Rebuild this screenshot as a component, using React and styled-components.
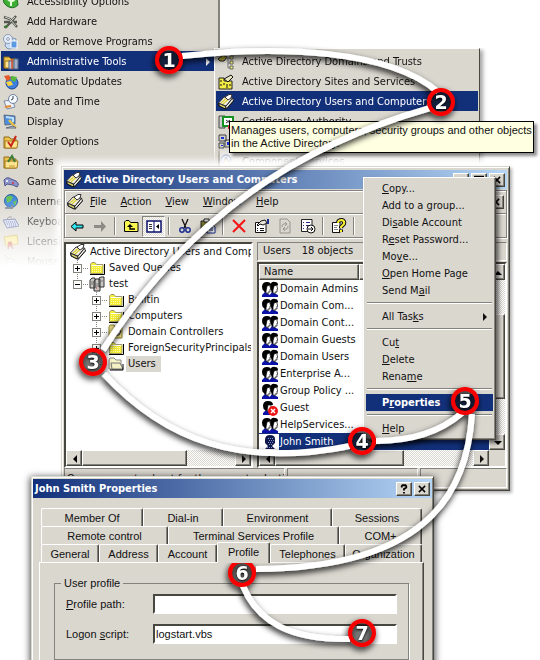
import React from 'react';
import styled, { createGlobalStyle, css } from 'styled-components';

const colors = {
  face: '#dad7cf',
  navy: '#12307a',
  sky: '#b4d5f5',
  shade: '#84827c',
  dark: '#47463f',
  info: '#ffffe1',
};

const fonts = {
  ui: "'DejaVu Sans Condensed', 'DejaVu Sans', sans-serif",
  dialog: "'Liberation Sans', Arial, sans-serif",
};

const raised = css`
  border: 1px solid;
  border-color: #fff ${colors.dark} ${colors.dark} #fff;
  box-shadow: inset -1px -1px ${colors.shade};
`;

const sunken = css`
  border: 2px solid;
  border-color: ${colors.dark} #fff #fff ${colors.dark};
`;

const GlobalStyle = createGlobalStyle`
  * { box-sizing: border-box; }
  body { margin: 0; background: #fff; }
  button {
    margin: 0;
    padding: 0;
    border: 0;
    background: none;
    color: inherit;
    font: inherit;
    text-align: left;
  }
  ul { margin: 0; padding: 0; list-style: none; }
`;

const Desktop = styled.main`
  position: relative;
  height: 100vh;
  min-height: 400px;
  overflow: hidden;
  color: #111;
  font: 11px/16px ${fonts.ui};
  white-space: nowrap;
`;

/* ---------- icons ---------- */

const Svg = styled.svg`
  display: block;
  flex: none;
  width: ${p => p.$size || 16}px;
  height: ${p => p.$size || 16}px;
`;

const people = (
  <>
    <path d="M0 16 V14 L3 11 L8 14 V16 Z M7 15 L10 11 L16 14 V16 H7 Z" fill="#0a12a8" />
    <path d="M0 6 Q0 1 5 1 Q9 1 9 4 L6 5 L5 10 L3 12 L2 10 Q0 9 0 6 Z" fill="#000" />
    <path d="M5 5 L8 4 L8 6 L9 8 L8 8 V11 H6 V13 L4 12 V10 Z" fill="#fff" stroke="#000" strokeWidth="0.7" />
    <path d="M8 5 Q9 0 13 1 Q16 1 16 4 L14 5 L12 10 L10 12 L9 9 Z" fill="#000" />
    <path d="M12 5 L15 4 L15 6 L16 8 L15 8 V11 H13 V13 L11 12 V9 Z" fill="#fff" stroke="#000" strokeWidth="0.7" />
  </>
);

const folder = (
  <>
    <path d="M1.5 13.5 V4 L3 2.5 H6 L7.5 4.5 H14 V13.5 Z" fill="#f4ee35" stroke="#a09c70" />
    <path d="M1 14.5 H15.5 V4" fill="none" stroke="#000" />
    <path d="M2.5 5.5 H13" stroke="#fff" />
    <path d="M3 7.5 H13 M3 9.5 H13 M3 11.5 H13" stroke="#fffbb0" strokeDasharray="1 1" />
  </>
);

const book = (
  <>
    <path d="M0.5 9 L8 12 L7 15 L1 12 Z" fill="#77756c" stroke="#111" />
    <path d="M8 12 L14.5 4 L15.5 7 L8 15.5 Z" fill="#a9a79c" stroke="#111" />
    <path d="M8 13.5 L15 5.5" stroke="#fff" />
    <path d="M0.5 9 L6 3 L14.5 4 L8 12 Z" fill="#efece2" stroke="#333" />
    <path d="M3 9 L8 4.5 M5 10 L11 4.5" stroke="#d9cf35" strokeWidth="1.2" />
    <path d="M7 3 L11 0.5 H14 L13 4 L10 6 Z" fill="#fff" stroke="#333" />
    <path d="M2 11 L7 13.5" stroke="#f5ed58" />
  </>
);

const manila = (
  <>
    <path d="M1 14 V3 H6 L8 5 H13 V14 Z" fill="#eec34f" stroke="#8f6915" />
    <path d="M2 14 V7 H15 L14 14 Z" fill="#ffe58f" stroke="#a47b1c" />
  </>
);

const icons = {
  access: (
    <>
      <path d="M0 4 L10 0 L14 4 L15 11 Q10 16 4 12 L1 9 Z" fill="#3fae36" stroke="#1f7322" />
      <path d="M4 4 Q8 10 12 5 M8 4 V12" stroke="#e4ffd8" strokeWidth="2" fill="none" />
    </>
  ),
  hardware: (
    <>
      <path d="M1 3 L7 5 L14 13 M13 2 L7 9 L2 14 M1 8 L14 8" stroke="#555850" strokeWidth="2.4" fill="none" />
      <path d="M2 3 L7 5 L13 12 M12 3 L7 8" stroke="#cfcfc8" fill="none" />
      <path d="M1 13 L5 12" stroke="#3f7a35" strokeWidth="2" />
    </>
  ),
  programs: (
    <>
      <path d="M4 2 L13 5 V14 L5 15 L2 12 Z" fill="#c9dcf3" stroke="#7b93b5" />
      <circle cx="5" cy="5" r="4.5" fill="#e4ecf8" stroke="#8d9bb5" />
      <circle cx="5" cy="5" r="1.4" fill="#fff" stroke="#8d9bb5" />
      <rect x="8" y="7" width="6" height="7" fill="#5d99e0" stroke="#fff" />
    </>
  ),
  admin: (
    <>
      {manila}
      <rect x="6" y="7" width="4" height="8" fill="#b9c7dc" stroke="#536785" />
      <rect x="11" y="5" width="4" height="10" fill="#a3b2c8" stroke="#536785" />
      <path d="M9 5 V15" stroke="#d8502b" strokeWidth="1.5" />
    </>
  ),
  updates: (
    <>
      <circle cx="9" cy="9" r="6" fill="#3d7fe0" stroke="#1d4590" />
      <path d="M1 2 L6 1 L8 5 L4 7 Z" fill="#e25a2b" />
      <path d="M8 2 L14 3 L12 8 L8 6 Z" fill="#58b83a" />
      <path d="M3 8 L8 7 L10 11 L5 12 Z" fill="#ffd43a" />
    </>
  ),
  date: (
    <>
      <path d="M1 7 L9 6 L12 13 L4 15 Z" fill="#eef3fb" stroke="#7a8ba8" />
      <path d="M2 13 L8 12" stroke="#e0892c" strokeWidth="2" />
      <circle cx="10" cy="5" r="4.5" fill="#f6f9ff" stroke="#6c7f9e" />
      <path d="M10 2 V5 L8 6" stroke="#345" fill="none" />
    </>
  ),
  display: (
    <>
      <path d="M1 1 L12 2 V10 L2 11 Z" fill="#4a90df" stroke="#5f6d80" />
      <path d="M3 3 L10 4 V8" stroke="#bfe0ff" strokeWidth="2" fill="none" />
      <path d="M6 6 L13 14" stroke="#e8bf45" strokeWidth="2.5" />
      <path d="M3 14 L10 12 L13 14 Z" fill="#c7cedb" stroke="#5f6d80" />
    </>
  ),
  options: (
    <>
      {manila}
      <path d="M5 8 L8 12 L13 2" stroke="#c8281c" strokeWidth="2" fill="none" />
    </>
  ),
  fonts: (
    <>
      {manila}
      <path d="M5 8 L9 2 L12 8" stroke="#3d7d37" strokeWidth="2" fill="none" />
      <path d="M6 12 H12" stroke="#c69a2e" />
    </>
  ),
  game: (
    <>
      <path d="M1 6 Q4 2 8 5 L13 7 Q17 10 14 13 L10 11 L4 10 L2 12 Z" fill="#8d94cc" stroke="#50568a" />
      <circle cx="4" cy="7" r="1" fill="#fff" />
      <circle cx="10" cy="9" r="1" fill="#d33" />
    </>
  ),
  internet: (
    <>
      <circle cx="8" cy="7" r="6.5" fill="#3d87dc" stroke="#265da6" />
      <path d="M3 3 Q8 0 10 3 L8 7 L4 9 Z M10 8 L14 6 L12 12 Z" fill="#63bf55" />
      <path d="M2 14 H9 V11" stroke="#7e8897" strokeWidth="2" fill="none" />
    </>
  ),
  keyboard: (
    <>
      <path d="M0 6 L12 5 L16 12 L4 14 Z" fill="#d0d7ee" stroke="#6a74a5" />
      <path d="M3 8 H12 M4 10 H13 M6 12 H13" stroke="#5865a8" strokeDasharray="1 1" />
      <path d="M4 5 Q5 2 9 3" stroke="#888" fill="none" />
    </>
  ),
  license: (
    <>
      <path d="M1 3 L14 1 L15 10 L3 12 Z" fill="#f8e47b" stroke="#c8a83d" />
      <circle cx="7" cy="10" r="2.4" fill="#d0473b" />
      <path d="M6 11 L5 15 M8 11 L10 15" stroke="#c35a4e" strokeWidth="1.5" />
    </>
  ),
  mouse: (
    <>
      <path d="M4 6 Q8 3 12 7 Q16 14 10 15 Q4 14 4 6 Z" fill="#fff" stroke="#888" />
      <path d="M5 8 Q8 9 11 6 M2 1 Q3 4 6 5" stroke="#888" fill="none" />
    </>
  ),
  domains: (
    <>
      <path d="M0 5 L5 1 L9 3 L6 7 L2 7 Z" fill="#b8b23c" stroke="#222" />
      <path d="M8 4 H12 M10 4 V14 H12 M10 9 H12" stroke="#777" fill="none" />
      <path d="M12 2 H15 V5 H12 Z M12 7 H15 V10 H12 Z M12 12 H15 V15 H12 Z" fill="#f0ef6a" stroke="#666" />
    </>
  ),
  sites: (
    <>
      <path d="M1 4 H6 V7 H14 V15 H1 Z" fill="#f3ec45" stroke="#222" />
      <path d="M3 6 V8 M3 10 V12 M6 9 V11 M9 10 V14 M12 10 V12" stroke="#111" />
      <path d="M6 5 L13 1 L15 3 L10 8 Z" fill="#e6e2c0" stroke="#111" />
    </>
  ),
  book,
  cert: (
    <>
      <path d="M1 2 H7 V14 H1 Z" fill="#ccc" stroke="#444" />
      <rect x="5" y="3" width="10" height="9" fill="#fff" stroke="#159322" strokeWidth="2" />
      <path d="M8 6 L12 9 M12 6 L8 9" stroke="#333" />
      <path d="M11 11 V15" stroke="#d33" strokeWidth="2" />
    </>
  ),
  cluster: (
    <>
      <path d="M1 1 H8 V7 H1 Z M7 6 H15 V13 H7 Z M1 9 H6 V14 H1 Z" fill="#d0d0c8" stroke="#444" />
      <path d="M3 3 H6 V5 H3 Z M9 8 H13 V11 H9 Z M3 11 H5 V12 H3 Z" fill="#1c2fd0" />
    </>
  ),
  component: (
    <>
      <circle cx="8" cy="6" r="5" fill="#cfd9f0" stroke="#4a62a0" />
      <path d="M3 14 L8 3 L14 14 Z" fill="#e8d58c" stroke="#777" />
    </>
  ),
  folder,
  openFolder: (
    <>
      <path d="M1 13 V4 L2 2 H6 L8 4 H13 V13 Z" fill="#f8f6c8" stroke="#888" />
      <path d="M3 7 H12 L15 13 H4 Z" fill="#f3f0c4" stroke="#777" />
      <path d="M2 14 H15 V8" fill="none" stroke="#000" />
    </>
  ),
  ou: (
    <>
      <path d="M1 14 V3 L2 1 H6 L7 3 H14 V14 Z" fill="#eee38a" stroke="#8d8330" />
      <path d="M4 11 L9 6 L13 7 L11 11 Z" fill="#fff" stroke="#222" />
    </>
  ),
  domain: (
    <>
      <path d="M1 4 L3 2 H6 V12 H1 Z M10 2 L12 1 H15 V11 H10 Z M5 5 L7 3 H11 V15 H5 Z" fill="#c9c8c3" stroke="#333" />
      <path d="M2 6 H5 M6 8 H10 M6 10 H10 M11 5 H14 M2 8 H4" stroke="#777" />
      <path d="M7 12 H8" stroke="#d22" />
    </>
  ),
  group: people,
  guest: (
    <>
      <path d="M1 15 V13 L4 10 L8 13 V15 Z" fill="#0a12a8" />
      <path d="M1 6 Q1 1 6 1 Q11 1 11 5 L8 5 L6 10 L4 11 L3 10 Q1 9 1 6 Z" fill="#000" />
      <path d="M6 5 L9 5 L9 8 L7 11 L5 11 Z" fill="#fff" stroke="#000" strokeWidth="0.7" />
      <circle cx="11" cy="11" r="5" fill="#ee1515" />
      <path d="M9 9 L13 13 M13 9 L9 13" stroke="#fff" strokeWidth="1.5" />
    </>
  ),
  user: (
    <>
      <path d="M3 6 Q3 1 8 1 Q13 1 13 5 V9 L10 12 L13 15 H3 L6 12 L3 9 Z" fill="#10184a" />
      <path d="M6 4.5 H12 M7 6.5 H12 M6 8.5 H12 M7 10.5 H11 M5 13.5 H12" stroke="#7d98dc" strokeDasharray="1 1" />
    </>
  ),
  back: <path d="M2 8.5 L7 4 V7 H14 V10 H7 V13 Z" fill="#2fe4ee" stroke="#000" />,
  forward: <path d="M14 8.5 L9 3 V7 H2 V10 H9 V14 Z" fill="#8d8b85" />,
  up: (
    <>
      <path d="M1.5 13.5 V4 L3 2.5 H6 L7.5 4.5 H15 V13.5 Z" fill="#fcf651" stroke="#000" />
      <path d="M7 6 L4 9 H10 Z" fill="#000" />
      <path d="M7 7 V11 H12" stroke="#000" fill="none" strokeWidth="1.4" />
    </>
  ),
  panes: (
    <>
      <rect x="1" y="3" width="14" height="11" fill="#fff" stroke="#0a106c" strokeWidth="1.5" />
      <path d="M8 3 V14" stroke="#0a106c" />
      <path d="M3 6.5 H6 M3 8.5 H6 M3 10.5 H6" stroke="#333" />
      <path d="M13 6 L10 8.5 L13 11 Z" fill="#000" />
    </>
  ),
  cut: (
    <>
      <path d="M5 1 L9 10 M11 1 L7 10" stroke="#111" strokeWidth="1.3" />
      <circle cx="5" cy="12" r="2.2" fill="none" stroke="#1c2e91" strokeWidth="1.5" />
      <circle cx="11" cy="12" r="2.2" fill="none" stroke="#1c2e91" strokeWidth="1.5" />
    </>
  ),
  paste: (
    <>
      <path d="M1 3 H12 V14 H1 Z" fill="#7c7830" stroke="#222" />
      <path d="M4 1 H9 V4 H4 Z" fill="#ddd" stroke="#222" />
      <path d="M7 7 H13 L15 9 V15 H7 Z" fill="#fff" stroke="#1c2e91" />
      <path d="M9 10 H13 M9 12 H13" stroke="#1c2e91" />
    </>
  ),
  remove: <path d="M2 2 L14 14 M14 2 L2 14" stroke="#f41414" strokeWidth="2" />,
  props: (
    <>
      <path d="M1.5 4.5 H12 V14.5 H1.5 Z" fill="#fff" stroke="#111" />
      <path d="M3 10.5 H4 M6 10.5 H10 M3 12.5 H4 M6 12.5 H10" stroke="#111" />
      <path d="M3 7 L7 3 L11 2 L13 5 L9 7 L6 6 L4 8 Z" fill="#e9e6dc" stroke="#111" />
      <path d="M14 1 V6" stroke="#1c2e91" strokeWidth="2" />
    </>
  ),
  refresh: (
    <path
      d="M3 1 H10 L13 4 V15 H3 Z M5 9 Q5 5 9 6 M8 4 L10 6 L8 8 M11 8 Q11 12 7 11 M8 9 L6 11 L8 13"
      fill="none"
      stroke="#96948d"
    />
  ),
  exportList: (
    <>
      <path d="M1.5 1.5 H12 V13.5 H1.5 Z" fill="#fff" stroke="#222" />
      <path d="M3 4.5 H4 M6 4.5 H10 M3 7.5 H4 M6 7.5 H10 M3 10.5 H4" stroke="#222883" />
      <circle cx="11" cy="11" r="4" fill="#fff" stroke="#111" />
      <path d="M8 11 H13 M11 9 L13 11 L11 13" stroke="#111" fill="none" />
    </>
  ),
  help: (
    <>
      <path d="M1.5 4.5 H9 V14.5 H1.5 Z" fill="#fff" stroke="#111" />
      <path d="M3 7.5 H7 M3 9.5 H6 M3 11.5 H7" stroke="#888" />
      <path d="M7 5 Q7 2 11 2 Q14 3 13 6 L10 9 V10 M10 11.5 V14" fill="none" stroke="#111" strokeWidth="4" />
      <path d="M7 5 Q7 2 11 2 Q14 3 13 6 L10 9 V10 M10 12 V14" fill="none" stroke="#f6ee33" strokeWidth="2" />
    </>
  ),
  newUser: <path d="M2 3 H5 M2 7 H7 M2 12 H5" stroke="#ffee22" strokeWidth="2" />,
  left: <path d="M10 4 L6 8 L10 12 Z" fill="#000" />,
  right: <path d="M6 4 L10 8 L6 12 Z" fill="currentColor" />,
  upArrow: <path d="M4 10 L8 6 L12 10 Z" fill="#000" />,
  downArrow: <path d="M4 6 L8 10 L12 6 Z" fill="#000" />,
  minimize: <path d="M3 13 H10" stroke="#000" strokeWidth="3" />,
  maximize: <path d="M1 3 H15 M1 2 H15 V14 H1 Z" stroke="#000" strokeWidth="2" fill="none" />,
  close: <path d="M3 3 L13 13 M13 3 L3 13" stroke="#000" strokeWidth="2.4" />,
  question: (
    <path d="M5 6 V4 L6 3 H10 L11 4 V6 L8 8 V10 M8 12 V14" stroke="#000" strokeWidth="2.4" fill="none" />
  ),
};

const Icon = ({ name, size }) => (
  <Svg $size={size} viewBox="0 0 16 16" aria-hidden="true">
    {icons[name]}
  </Svg>
);

// "&" marks the underlined access key
const Label = ({ text }) => {
  const at = text.indexOf('&');
  if (at < 0) return text;
  return (
    <span>
      {text.slice(0, at)}
      <u>{text[at + 1]}</u>
      {text.slice(at + 2)}
    </span>
  );
};

/* ---------- menus ---------- */

const Menu = styled.nav`
  position: absolute;
  background: ${colors.face};
`;

const ControlPanelMenu = styled(Menu)`
  left: 0;
  top: -9px;
  width: 220px;
  padding-left: 1px;
  border-right: 2px solid ${colors.shade};
  mask-image: linear-gradient(#000 205px, transparent 276px);
`;

const ToolsMenu = styled(Menu)`
  left: 214px;
  top: 48px;
  width: 266px;
  padding: 2px 1px 0;
  border: 1px solid;
  border-color: #fff ${colors.dark} transparent #fff;
  box-shadow: 3px 2px 4px rgba(0, 0, 0, 0.35);
  mask-image: linear-gradient(#000 98px, transparent 118px);
  mask-clip: no-clip;
`;

const MenuItem = styled.button`
  display: flex;
  align-items: center;
  gap: 8px;
  width: 100%;
  height: 20px;
  padding: 1px 2px 0;
  ${p => p.$active && `background: ${colors.navy}; color: #fff;`}

  svg:nth-of-type(2) {
    margin-left: auto;
  }
`;

const ContextMenu = styled(Menu)`
  left: 363px;
  top: 177px;
  width: 133px;
  padding: 2px;
  ${raised};
  box-shadow: inset -1px -1px ${colors.shade}, 3px 3px 4px rgba(0, 0, 0, 0.55);
`;

const ContextItem = styled.button`
  display: flex;
  align-items: center;
  justify-content: space-between;
  width: 100%;
  height: 17px;
  padding-left: 16px;
  ${p => p.$active && `background: ${colors.navy}; color: #fff; font-weight: bold;`}
`;

const Separator = styled.hr`
  height: 2px;
  margin: 3px 1px 4px;
  border: 0;
  border-top: 1px solid ${colors.shade};
  border-bottom: 1px solid #fff;
`;

const Tooltip = styled.div`
  position: absolute;
  left: 229px;
  top: 121px;
  padding: 2px 1px;
  border: 1px solid #000;
  background: ${colors.info};
  font-family: ${fonts.dialog};
  line-height: 13px;
  box-shadow: 3px 3px 3px rgba(0, 0, 0, 0.45);
`;

/* ---------- windows ---------- */

const Window = styled.section`
  position: absolute;
  display: flex;
  flex-direction: column;
  border: 1px solid;
  border-color: ${colors.face} ${colors.dark} ${colors.dark} ${colors.face};
  background: ${colors.face};
`;

const ConsoleWindow = styled(Window)`
  left: 61px;
  top: 166px;
  width: 449px;
  height: 325px;
  padding: 3px 2px 2px;
  box-shadow: inset 1px 1px #fff, inset -1px -1px ${colors.shade}, 2px 2px 3px rgba(0, 0, 0, 0.3),
    0 0 7px 5px #fff;
`;

const DialogWindow = styled(Window)`
  left: 31px;
  top: 476px;
  width: 403px;
  height: 240px;
  padding: 2px 1px;
  box-shadow: inset 1px 1px #fff, inset -1px -1px ${colors.shade}, 0 2px 7px 1px rgba(0, 0, 0, 0.7);
`;

const TitleBar = styled.header`
  display: flex;
  align-items: center;
  gap: 2px;
  height: 19px;
  padding: 0 2px;
  background: linear-gradient(90deg, ${colors.navy}, ${colors.sky});
  color: #fff;
`;

const Title = styled.h1`
  flex: 1;
  margin: 0;
  font: bold 11px/18px ${fonts.ui};
`;

const CaptionButton = styled.button`
  display: grid;
  place-items: center;
  width: 16px;
  height: 14px;
  background: ${colors.face};
  ${raised};
`;

const ConsoleBars = styled.div`
  margin: 1px 0 4px;
  border: 1px solid ${colors.shade};
  box-shadow: inset 1px 1px #fff, 1px 1px #fff;
`;

const MenuBar = styled.div`
  display: flex;
  align-items: center;
  height: 23px;
  padding: 0 2px;
  border-bottom: 1px solid ${colors.shade};
`;

const MenuButton = styled.button`
  padding: 0 7px;
`;

const Spacer = styled.span`
  flex: 1;
`;

const ToolBar = styled.div`
  display: flex;
  align-items: center;
  height: 23px;
  border-top: 1px solid #fff;
`;

const ToolButton = styled.button`
  display: grid;
  place-items: center;
  width: 23px;
  height: 21px;
  ${p =>
    p.$pressed &&
    css`
      border: 1px solid;
      border-color: ${colors.shade} #fff #fff ${colors.shade};
      background: repeating-conic-gradient(#fff 0 25%, ${colors.face} 0 50%) 0 0 / 2px 2px;
    `}
`;

const ToolDivider = styled.span`
  width: 2px;
  height: 18px;
  margin: 0 3px;
  border-left: 1px solid ${colors.shade};
  border-right: 1px solid #fff;
`;

const Panes = styled.div`
  display: grid;
  grid-template-columns: 189px 1fr;
  gap: 4px;
  flex: 1;
  min-height: 0;
`;

const TreePane = styled.div`
  display: flex;
  flex-direction: column;
  min-width: 0;
  overflow: hidden;
  background: #fff;
  ${sunken};
`;

const Tree = styled.ul`
  flex: 1;
  overflow: hidden;
`;

const TreeRow = styled.li`
  display: flex;
  gap: 2px;
  height: 16px;
  padding-left: ${p => [4, 7, 26][p.$level]}px;
`;

const TreeLabel = styled.button`
  padding: 0 2px;
  ${p => p.$selected && `background: ${colors.face}; padding-right: 5px;`}
`;

const Expander = styled.svg`
  flex: none;
  width: 16px;
  height: 16px;
  margin-right: -2px;
  fill: #fff;
  stroke: ${colors.shade};
`;

const ListPane = styled.div`
  display: flex;
  flex-direction: column;
  gap: 1px;
  min-width: 0;
`;

const Description = styled.p`
  display: flex;
  gap: 11px;
  height: 19px;
  margin: 0;
  padding: 0 5px;
  border: 1px solid;
  border-color: ${colors.shade} #fff #fff ${colors.shade};
`;

const ListView = styled.div`
  display: grid;
  grid-template: 1fr 16px / 1fr 16px;
  flex: 1;
  min-height: 0;
  background: #fff;
  ${sunken};
`;

const ListBody = styled.div`
  overflow: hidden;
`;

const Table = styled.table`
  width: 100%;
  border-spacing: 0;
  table-layout: fixed;
`;

const HeadCell = styled.th`
  width: ${p => p.$width};
  height: 16px;
  padding: 0 4px;
  background: ${colors.face};
  font-weight: normal;
  line-height: 14px;
  text-align: left;
  ${raised};
`;

const ListRow = styled.tr`
  height: 17px;

  td {
    padding: 0;
    ${p => p.$selected && `background: ${colors.navy}; color: #fff;`}
  }
`;

const NameCell = styled.div`
  display: flex;
  align-items: center;
  height: 17px;

  > svg {
    width: 20px;
    padding: 0 1px 0 3px;
    background: #fff;
  }
  > span {
    padding-left: 1px;
  }
`;

/* ---------- scroll bars ---------- */

const Scroll = styled.div`
  display: flex;
  flex-direction: ${p => (p.$vertical ? 'column' : 'row')};
  background: repeating-conic-gradient(#fff 0 25%, ${colors.face} 0 50%) 0 0 / 2px 2px;
`;

const ScrollButton = styled.button`
  display: grid;
  place-items: center;
  width: 16px;
  height: 16px;
  background: ${colors.face};
  ${raised};
`;

const Track = styled.span`
  flex: ${p => p.$grow || 1};
`;

const Thumb = styled.span`
  flex: ${p => p.$grow};
  background: ${colors.face};
  ${raised};
`;

const Corner = styled.span`
  background: ${colors.face};
`;

const StatusBar = styled.footer`
  display: grid;
  grid-template-columns: 221px 131px 1fr;
  gap: 2px;
  height: 20px;
  margin-top: 2px;
`;

const StatusCell = styled.span`
  overflow: hidden;
  padding: 2px;
  border: 1px solid;
  border-color: ${colors.shade} #fff #fff ${colors.shade};
`;

/* ---------- properties dialog ---------- */

const DialogBody = styled.div`
  display: flex;
  flex-direction: column;
  flex: 1;
  padding: 10px 8px 0 6px;
  font-family: ${fonts.dialog};
`;

const TabRow = styled.div`
  display: flex;
  align-items: flex-end;
  height: 18px;
  padding: 0 2px;
`;

const Tab = styled.button`
  flex: 0 1 ${p => p.$width}px;
  height: 18px;
  border: 1px solid;
  border-color: #fff ${colors.dark} transparent #fff;
  border-bottom: 0;
  border-radius: 2px 2px 0 0;
  box-shadow: inset -1px 0 ${colors.shade};
  background: ${colors.face};
  text-align: center;
  ${p =>
    p.$active &&
    css`
      height: 21px;
      margin-bottom: -1px;
      padding-bottom: 3px;
      z-index: 1;
    `}
`;

const TabPanel = styled.div`
  flex: 1;
  padding: 12px 14px;
  border: 1px solid;
  border-color: #fff ${colors.dark} ${colors.dark} #fff;
  box-shadow: inset -1px 0 ${colors.shade};
`;

const GroupBox = styled.fieldset`
  display: grid;
  grid-template-columns: 87px 1fr;
  row-gap: 9px;
  align-items: center;
  height: 85px;
  margin: 0;
  padding: 2px 11px 14px;
  border: 1px solid ${colors.shade};
  box-shadow: 1px 1px #fff;
`;

const Legend = styled.legend`
  margin-left: -5px;
  padding: 0 3px;
`;

const TextInput = styled.input`
  width: 100%;
  height: 20px;
  padding: 0 1px;
  background: #fff;
  color: #111;
  font: 11px/16px ${fonts.dialog};
  outline: 0;
  border-radius: 0;
  ${sunken};
`;

/* ---------- numbered trail ---------- */

const Trail = styled.svg`
  position: absolute;
  left: 0;
  top: 0;
  width: 540px;
  height: 660px;
  pointer-events: none;

  path {
    fill: none;
    stroke: #fff;
    stroke-width: 6;
  }
  circle {
    fill: rgba(20, 20, 20, 0.35);
    stroke: #f80000;
    stroke-width: 4;
  }
  text {
    fill: #fff;
    font: bold 19px 'DejaVu Sans', sans-serif;
    text-anchor: middle;
    filter: drop-shadow(0 1px 1px #000);
  }
`;

const controlPanel = [
  ['access', 'Accessibility Options'],
  ['hardware', 'Add Hardware'],
  ['programs', 'Add or Remove Programs'],
  ['admin', 'Administrative Tools'],
  ['updates', 'Automatic Updates'],
  ['date', 'Date and Time'],
  ['display', 'Display'],
  ['options', 'Folder Options'],
  ['fonts', 'Fonts'],
  ['game', 'Game Controllers'],
  ['internet', 'Internet Options'],
  ['keyboard', 'Keyboard'],
  ['license', 'Licensing'],
  ['mouse', 'Mouse'],
];

const adminTools = [
  ['domains', 'Active Directory Domains and Trusts'],
  ['sites', 'Active Directory Sites and Services'],
  ['book', 'Active Directory Users and Computers'],
  ['cert', 'Certification Authority'],
  ['cluster', 'Cluster Administrator'],
  ['component', 'Component Services'],
];

const treeNodes = [
  { level: 0, icon: 'book', text: 'Active Directory Users and Computers' },
  { level: 1, icon: 'folder', text: 'Saved Queries', box: '+' },
  { level: 1, icon: 'domain', text: 'test', box: '-', last: true },
  { level: 2, icon: 'folder', text: 'Builtin', box: '+' },
  { level: 2, icon: 'folder', text: 'Computers', box: '+' },
  { level: 2, icon: 'ou', text: 'Domain Controllers', box: '+' },
  { level: 2, icon: 'folder', text: 'ForeignSecurityPrincipals', box: '+' },
  { level: 2, icon: 'openFolder', text: 'Users', last: true, selected: true },
];

const accounts = [
  ['group', 'Domain Admins'],
  ['group', 'Domain Com...'],
  ['group', 'Domain Cont...'],
  ['group', 'Domain Guests'],
  ['group', 'Domain Users'],
  ['group', 'Enterprise A...'],
  ['group', 'Group Policy ...'],
  ['guest', 'Guest'],
  ['group', 'HelpServices...'],
  ['user', 'John Smith'],
];

const tools = [
  'back', 'forward', '|', 'up', 'panes', '|', 'cut', 'paste', '|', 'remove', 'props',
  'refresh', 'exportList', '|', 'help', '|', 'newUser',
];

const contextItems = [
  '&Copy...', 'Add to a &group...', 'Di&sable Account', 'R&eset Password...', 'Mo&ve...',
  '&Open Home Page', 'Send M&ail', '|', 'All Tas&ks', '|', 'Cu&t', '&Delete', 'Rena&me', '|',
  'P&roperties', '|', '&Help',
];

const tabRows = [
  [['Member Of', 102], ['Dial-in', 80], ['Environment', 109], ['Sessions', 90]],
  [['Remote control', 127], ['Terminal Services Profile', 171], ['COM+', 83]],
  [['General', 58], ['Address', 59], ['Account', 59], ['Profile', 53], ['Telephones', 75], ['Organization', 77]],
];

const curves = [
  'M182 56 C280 45 390 50 438 92',
  'M430 108 C300 145 190 215 103 350',
  'M104 374 C165 440 240 468 350 446',
  'M376 441 C410 441 440 432 462 413',
  'M472 414 C468 480 440 568 256 569',
  'M243 586 C258 622 290 640 350 639',
];

const steps = [[169, 60], [441, 102], [93, 362], [362, 441], [465, 401], [242, 573], [362, 633]];

const TreeNode = ({ level, icon, text, box, last, selected }) => (
  <TreeRow $level={level}>
    {level > 0 && (
      <Expander viewBox="0 0 16 16" aria-hidden="true">
        <path d={`M4.5 0 V${last ? 8 : 16} M8 8.5 H16`} strokeDasharray="1 1" />
        {box && <rect x="0.5" y="4.5" width="8" height="8" />}
        {box && <path d={box === '+' ? 'M2 8.5 H7 M4.5 6 V11' : 'M2 8.5 H7'} stroke="#000" />}
      </Expander>
    )}
    <Icon name={icon} />
    <TreeLabel type="button" $selected={selected}>{text}</TreeLabel>
  </TreeRow>
);

const ScrollBar = ({ vertical, parts }) => (
  <Scroll $vertical={vertical}>
    <ScrollButton type="button" aria-label={vertical ? 'Scroll up' : 'Scroll left'}>
      <Icon name={vertical ? 'upArrow' : 'left'} />
    </ScrollButton>
    {parts[0] > 0 && <Track $grow={parts[0]} />}
    <Thumb $grow={parts[1]} />
    <Track $grow={parts[2]} />
    <ScrollButton type="button" aria-label={vertical ? 'Scroll down' : 'Scroll right'}>
      <Icon name={vertical ? 'downArrow' : 'right'} />
    </ScrollButton>
  </Scroll>
);

const Console = () => (
  <ConsoleWindow>
    <TitleBar>
      <Icon name="book" />
      <Title>Active Directory Users and Computers</Title>
      {['minimize', 'maximize', 'close'].map(name => (
        <CaptionButton key={name} type="button" aria-label={name}>
          <Icon name={name} size={10} />
        </CaptionButton>
      ))}
    </TitleBar>
    <ConsoleBars>
      <MenuBar>
        <Icon name="book" />
        {['&File', '&Action', '&View', '&Window', '&Help'].map(text => (
          <MenuButton key={text} type="button"><Label text={text} /></MenuButton>
        ))}
        <Spacer />
        <CaptionButton type="button" aria-label="close view"><Icon name="close" size={10} /></CaptionButton>
      </MenuBar>
      <ToolBar>
        {tools.map((name, i) =>
          name === '|' ? (
            <ToolDivider key={i} />
          ) : (
            <ToolButton key={name} type="button" aria-label={name} $pressed={name === 'panes'}>
              <Icon name={name} />
            </ToolButton>
          )
        )}
      </ToolBar>
    </ConsoleBars>
    <Panes>
      <TreePane>
        <Tree>
          {treeNodes.map(node => <TreeNode key={node.text} {...node} />)}
        </Tree>
        <ScrollBar parts={[0, 105, 49]} />
      </TreePane>
      <ListPane>
        <Description>
          <span>Users</span>
          <span>18 objects</span>
        </Description>
        <ListView>
          <ListBody>
            <Table>
              <thead>
                <tr>
                  <HeadCell $width="100px">Name</HeadCell>
                  <HeadCell aria-label="Type" />
                </tr>
              </thead>
              <tbody>
                {accounts.map(([icon, name]) => (
                  <ListRow key={name} $selected={icon === 'user'}>
                    <td><NameCell><Icon name={icon} /><span>{name}</span></NameCell></td>
                    <td>{icon === 'user' ? 'User' : ''}</td>
                  </ListRow>
                ))}
              </tbody>
            </Table>
          </ListBody>
          <ScrollBar vertical parts={[34, 85, 35]} />
          <ScrollBar parts={[0, 128, 70]} />
          <Corner />
        </ListView>
      </ListPane>
    </Panes>
    <StatusBar>
      <StatusCell>Opens property sheet for the current selection.</StatusCell>
      <StatusCell />
      <StatusCell />
    </StatusBar>
  </ConsoleWindow>
);

const PropertiesDialog = () => (
  <DialogWindow>
    <TitleBar>
      <Title>John Smith Properties</Title>
      <CaptionButton type="button" aria-label="help"><Icon name="question" size={12} /></CaptionButton>
      <CaptionButton type="button" aria-label="close"><Icon name="close" size={10} /></CaptionButton>
    </TitleBar>
    <DialogBody>
      {tabRows.map((row, i) => (
        <TabRow key={i}>
          {row.map(([text, width]) => (
            <Tab key={text} type="button" $width={width} $active={text === 'Profile'}>{text}</Tab>
          ))}
        </TabRow>
      ))}
      <TabPanel>
        <GroupBox>
          <Legend>User profile</Legend>
          <label htmlFor="profile-path"><Label text="&Profile path:" /></label>
          <TextInput id="profile-path" type="text" />
          <label htmlFor="logon-script"><Label text="Logon &script:" /></label>
          <TextInput id="logon-script" type="text" defaultValue="logstart.vbs" />
        </GroupBox>
      </TabPanel>
    </DialogBody>
  </DialogWindow>
);

const App = () => (
  <Desktop>
    <GlobalStyle />
    <ControlPanelMenu>
      {controlPanel.map(([icon, text]) => (
        <MenuItem key={text} type="button" $active={icon === 'admin'}>
          <Icon name={icon} />
          {text}
          {icon === 'admin' && <Icon name="right" />}
        </MenuItem>
      ))}
    </ControlPanelMenu>
    <ToolsMenu>
      {adminTools.map(([icon, text]) => (
        <MenuItem key={text} type="button" $active={icon === 'book'}>
          <Icon name={icon} />
          {text}
        </MenuItem>
      ))}
    </ToolsMenu>
    <Console />
    <Tooltip role="tooltip">
      Manages users, computers, security groups and other objects
      <br />
      in the Active Directory.
    </Tooltip>
    <ContextMenu>
      {contextItems.map((text, i) =>
        text === '|' ? (
          <Separator key={i} />
        ) : (
          <ContextItem key={text} type="button" $active={text === 'P&roperties'}>
            <Label text={text} />
            {text.startsWith('All') && <Icon name="right" />}
          </ContextItem>
        )
      )}
    </ContextMenu>
    <PropertiesDialog />
    <Trail viewBox="0 0 540 660">
      <defs>
        <filter id="soft" x="-20%" y="-20%" width="140%" height="140%">
          <feDropShadow dx="-1" dy="3" stdDeviation="3" floodColor="#000" floodOpacity="0.95" />
        </filter>
      </defs>
      <g filter="url(#soft)">
        {curves.map(d => <path key={d} d={d} />)}
        {steps.map(([x, y]) => <circle key={x + y} cx={x} cy={y} r="12" />)}
      </g>
      {steps.map(([x, y], i) => (
        <text key={i} x={x} y={y + 7}>{i + 1}</text>
      ))}
    </Trail>
  </Desktop>
);

export default App;
